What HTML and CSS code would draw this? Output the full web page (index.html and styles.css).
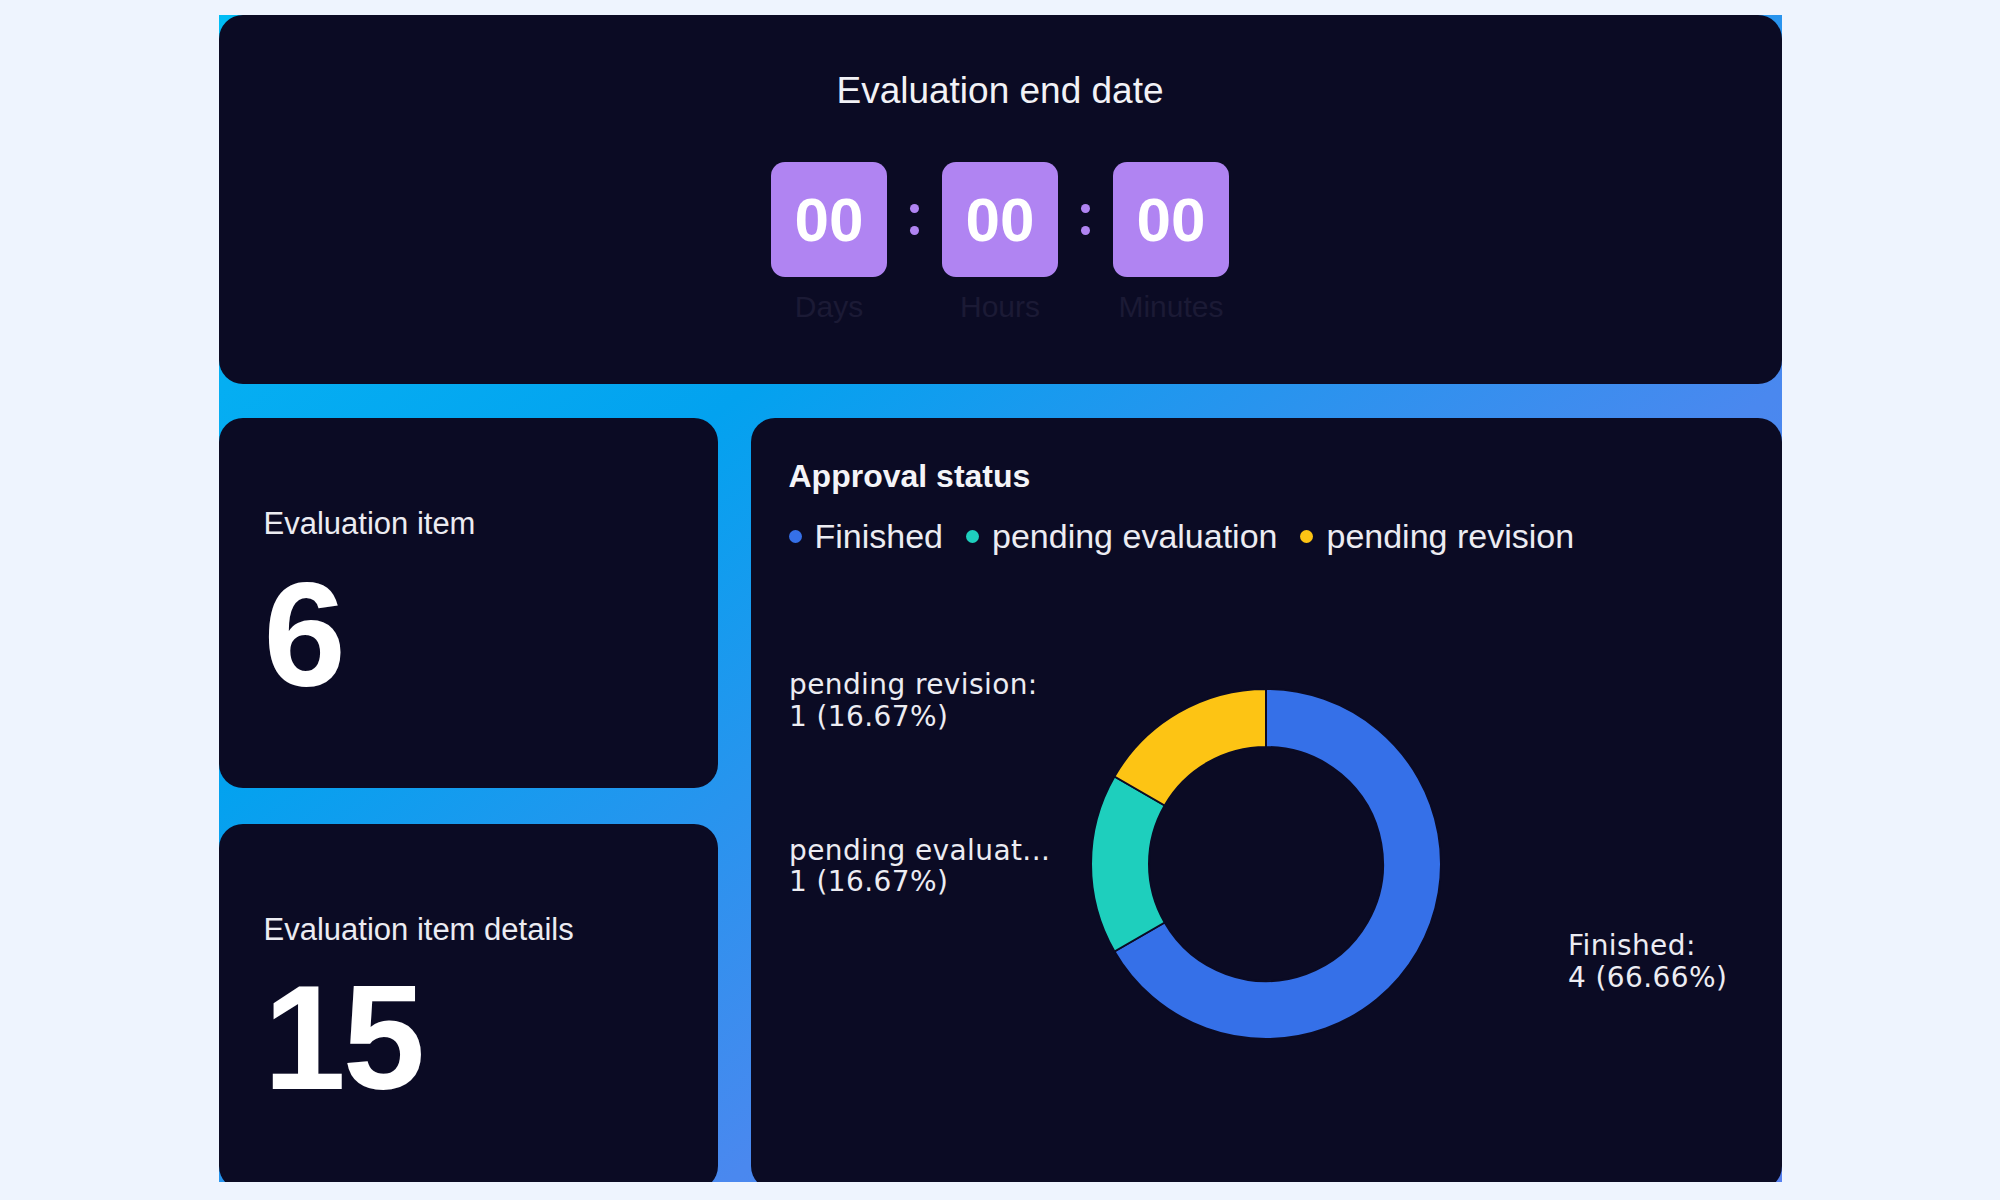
FILE: index.html
```html
<!DOCTYPE html>
<html lang="en">
<head>
<meta charset="utf-8">
<title>Evaluation dashboard</title>
<link rel="stylesheet" href="styles.css">
</head>
<body>
<div class="board">
  <section class="card countdown">
    <h1 class="cd-title">Evaluation end date</h1>
    <div class="cd-row">
      <div class="cd-unit"><div class="cd-box">00</div><div class="cd-label">Days</div></div>
      <div class="cd-colon"><i></i><i></i></div>
      <div class="cd-unit"><div class="cd-box">00</div><div class="cd-label">Hours</div></div>
      <div class="cd-colon"><i></i><i></i></div>
      <div class="cd-unit"><div class="cd-box">00</div><div class="cd-label">Minutes</div></div>
    </div>
  </section>

  <div class="left-col">
    <section class="card stat stat-first">
      <div class="stat-label">Evaluation item</div>
      <div class="stat-value">6</div>
    </section>
    <section class="card stat stat-second">
      <div class="stat-label">Evaluation item details</div>
      <div class="stat-value">15</div>
    </section>
  </div>

  <section class="card status">
    <h2 class="status-title">Approval status</h2>
    <ul class="legend">
      <li><span class="dot dot-blue"></span>Finished</li>
      <li><span class="dot dot-teal"></span>pending evaluation</li>
      <li><span class="dot dot-yellow"></span>pending revision</li>
    </ul>
    <svg class="chart" width="993" height="604" viewBox="0 0 993 604">
      <path class="seg seg-blue" d="M477 111 A175 175 0 1 1 325.45 373.5 L375.68 344.5 A117 117 0 1 0 477 169 Z"/>
      <path class="seg seg-teal" d="M325.45 373.5 A175 175 0 0 1 325.45 198.5 L375.68 227.5 A117 117 0 0 0 375.68 344.5 Z"/>
      <path class="seg seg-yellow" d="M325.45 198.5 A175 175 0 0 1 477 111 L477 169 A117 117 0 0 0 375.68 227.5 Z"/>
      <text class="lbl" x="0" y="116">pending revision:</text>
      <text class="lbl" x="0" y="148">1 (16.67%)</text>
      <text class="lbl" x="0" y="282">pending evaluat...</text>
      <text class="lbl" x="0" y="313">1 (16.67%)</text>
      <text class="lbl" x="779" y="377">Finished:</text>
      <text class="lbl" x="779" y="409">4 (66.66%)</text>
    </svg>
  </section>
</div>
</body>
</html>
```

FILE: styles.css
```css
html, body {
  margin: 0;
  padding: 0;
}
body {
  background: #eef4fe;
  font-family: "Liberation Sans", Arial, sans-serif;
  color: #ffffff;
}
.board {
  width: 1563px;
  height: 1167px;
  margin: 15px auto 0;
  display: grid;
  grid-template-columns: 499px 1031px;
  grid-template-rows: 369px 772px;
  gap: 34px 33px;
  overflow: hidden;
  background: linear-gradient(143deg, #00bdf5 0%, #05aef2 16%, #03a2ef 33%, #2894ee 50%, #4a88ef 66%, #5680ee 100%);
}
.card {
  background: #0b0b24;
  border-radius: 24px;
  box-sizing: border-box;
  overflow: hidden;
}

/* countdown */
.countdown {
  grid-column: 1 / -1;
  padding-top: 57px;
  display: flex;
  flex-direction: column;
  align-items: center;
}
.cd-title {
  margin: 0;
  font-size: 37px;
  line-height: 1;
  font-weight: 400;
  color: #f2f2f6;
}
.cd-row {
  margin-top: 53px;
  display: flex;
  align-items: flex-start;
}
.cd-unit {
  width: 116px;
  display: flex;
  flex-direction: column;
  align-items: center;
}
.cd-box {
  width: 116px;
  height: 115px;
  border-radius: 14px;
  background: #b084f2;
  display: flex;
  align-items: center;
  justify-content: center;
  font-size: 62px;
  line-height: 1;
  font-weight: 700;
  color: #ffffff;
}
.cd-label {
  margin-top: 15px;
  font-size: 30px;
  line-height: 1;
  color: #1b1a35;
}
.cd-colon {
  width: 9px;
  height: 115px;
  margin: 0 23px;
  display: flex;
  flex-direction: column;
  justify-content: center;
  gap: 13px;
}
.cd-colon i {
  display: block;
  width: 9px;
  height: 9px;
  border-radius: 50%;
  background: #b084f2;
}

/* stats */
.left-col {
  display: flex;
  flex-direction: column;
  gap: 36px;
  min-height: 0;
}
.stat {
  padding: 90px 0 0 45px;
}
.stat-first {
  height: 370px;
  flex: none;
}
.stat-second {
  flex: 1;
}
.stat-label {
  font-size: 31px;
  line-height: 1;
  color: #ececf2;
}
.stat-value {
  margin-top: 22px;
  font-size: 148px;
  line-height: 1;
  font-weight: 700;
  color: #ffffff;
}
.stat-second .stat-value {
  margin-top: 19px;
  letter-spacing: -3px;
}

/* approval status */
.status {
  padding: 42px 0 0 38px;
}
.status-title {
  margin: 0;
  font-size: 32px;
  line-height: 1;
  font-weight: 700;
  color: #f4f4f8;
}
.legend {
  list-style: none;
  margin: 27px 0 0;
  padding: 0;
  display: flex;
  gap: 23px;
  font-size: 34px;
  line-height: 1;
  color: #ececf2;
}
.legend li {
  display: flex;
  align-items: center;
}
.dot {
  width: 13px;
  height: 13px;
  border-radius: 50%;
  margin-right: 13px;
}
.dot-blue { background: #3570e8; }
.dot-teal { background: #1ecfbd; }
.dot-yellow { background: #fdc414; }
.chart {
  display: block;
  margin-top: 25px;
}
.seg {
  stroke: #0b0b24;
  stroke-width: 2;
}
.seg-blue { fill: #3570e8; }
.seg-teal { fill: #1ecfbd; }
.seg-yellow { fill: #fdc414; }
.lbl {
  font-family: "DejaVu Sans", sans-serif;
  font-size: 28px;
  letter-spacing: 0.4px;
  fill: #ececf2;
}
```
